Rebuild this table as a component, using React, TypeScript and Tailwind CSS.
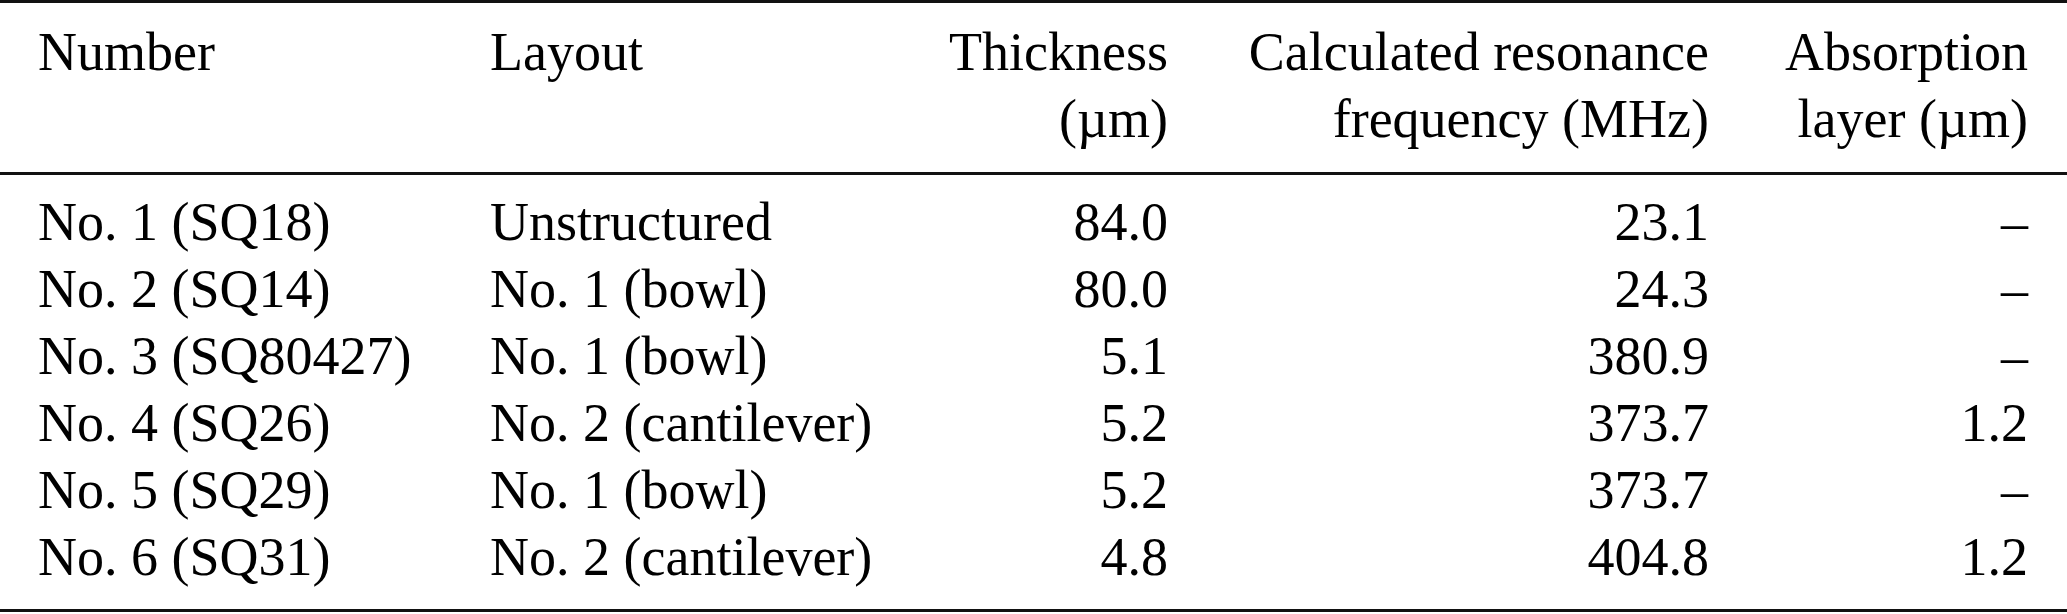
const rows = [
  { num: 'No. 1 (SQ18)', layout: 'Unstructured', thick: '84.0', freq: '23.1', abs: '–' },
  { num: 'No. 2 (SQ14)', layout: 'No. 1 (bowl)', thick: '80.0', freq: '24.3', abs: '–' },
  { num: 'No. 3 (SQ80427)', layout: 'No. 1 (bowl)', thick: '5.1', freq: '380.9', abs: '–' },
  { num: 'No. 4 (SQ26)', layout: 'No. 2 (cantilever)', thick: '5.2', freq: '373.7', abs: '1.2' },
  { num: 'No. 5 (SQ29)', layout: 'No. 1 (bowl)', thick: '5.2', freq: '373.7', abs: '–' },
  { num: 'No. 6 (SQ31)', layout: 'No. 2 (cantilever)', thick: '4.8', freq: '404.8', abs: '1.2' },
];

const grid = 'grid grid-cols-[452px_400px_278px_541px_319px] pl-[38px] pr-[39px]';

export default function App() {
  return (
    <div
      className="w-[2067px] h-[614px] bg-white text-black text-[54px] leading-[67px] whitespace-nowrap"
      style={{ fontFamily: '"Liberation Serif", "Times New Roman", serif' }}
    >
      <div className="h-[3px] bg-[#111]" />

      {/* Header */}
      <div className={`${grid} pt-[16px] pb-[19px]`}>
        <div>Number</div>
        <div>Layout</div>
        <div className="text-right">
          Thickness
          <br />
          (µm)
        </div>
        <div className="text-right">
          Calculated resonance
          <br />
          frequency (MHz)
        </div>
        <div className="text-right">
          Absorption
          <br />
          layer (µm)
        </div>
      </div>

      <div className="h-[3px] bg-[#111]" />

      {/* Body */}
      <div className={`${grid} pt-[14px] pb-[18px]`}>
        {rows.map((r) => (
          <div key={r.num} className="contents">
            <div>{r.num}</div>
            <div>{r.layout}</div>
            <div className="text-right">{r.thick}</div>
            <div className="text-right">{r.freq}</div>
            <div className="text-right">{r.abs}</div>
          </div>
        ))}
      </div>

      <div className="h-[3px] bg-[#111]" />
    </div>
  );
}
